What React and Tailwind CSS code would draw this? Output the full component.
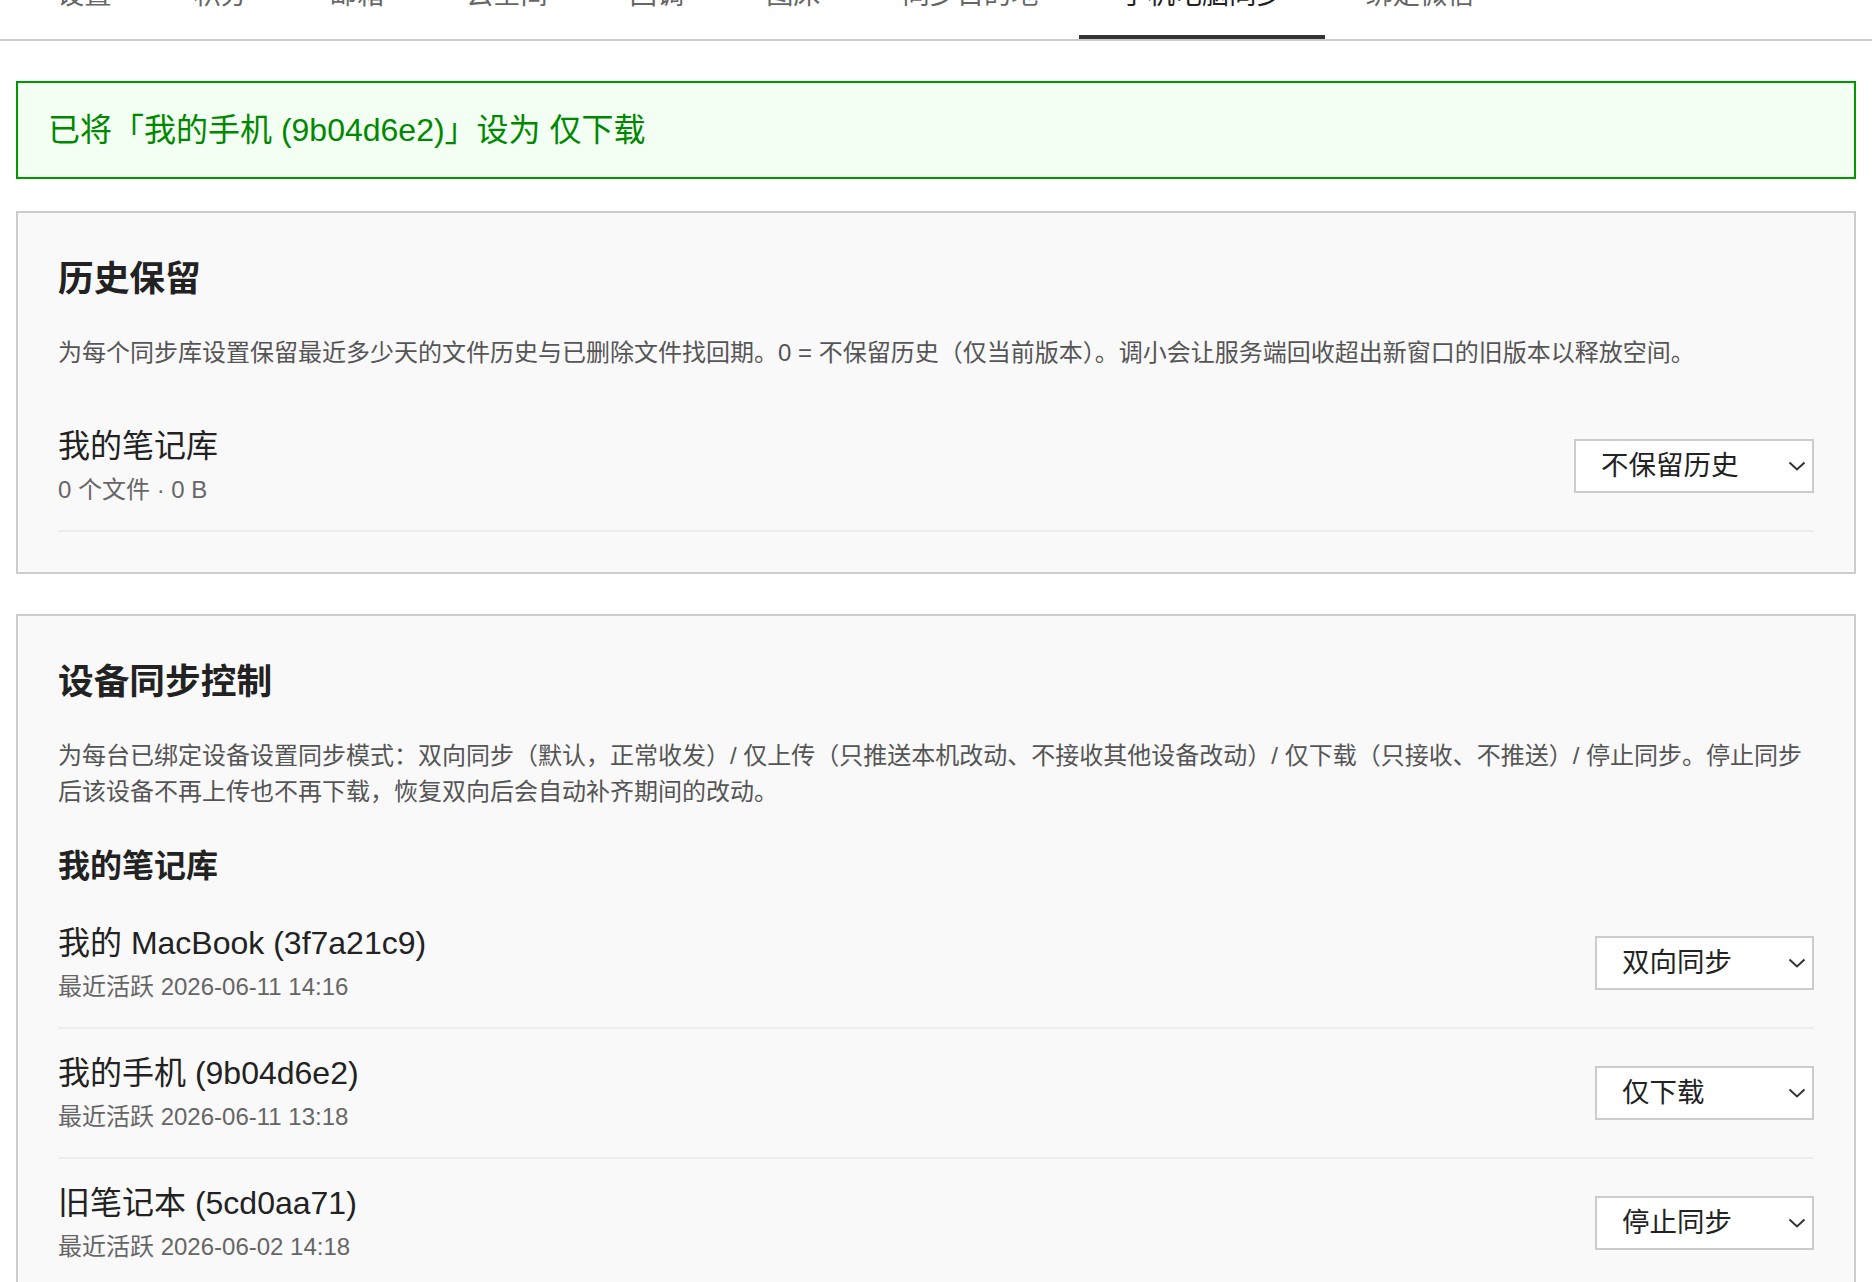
import React from 'react';

const tabs = ['设置', '积分', '邮箱', '云空间', '回调', '图床', '同步目的地', '手机电脑同步', '绑定微信'];

const devices = [
  { name: '我的 MacBook (3f7a21c9)', last: '最近活跃 2026-06-11 14:16', mode: '双向同步' },
  { name: '我的手机 (9b04d6e2)', last: '最近活跃 2026-06-11 13:18', mode: '仅下载' },
  { name: '旧笔记本 (5cd0aa71)', last: '最近活跃 2026-06-02 14:18', mode: '停止同步' },
];

const Chevron = () => (
  <svg width="18" height="10" viewBox="0 0 18 10" fill="none">
    <path d="M1.5 1.5 L9 8.5 L16.5 1.5" stroke="#333" strokeWidth="2" />
  </svg>
);

const SelectBox = ({ value, width }) => (
  <div className={`${width} h-[54px] flex items-center justify-between pl-[25px] pr-[6px] bg-white border-2 border-[#ccc] text-[27.5px] text-[#222]`}>
    <span>{value}</span>
    <Chevron />
  </div>
);

const Row = ({ title, meta, children }) => (
  <div className="flex items-center justify-between py-[22px] border-b-2 border-[#eee]">
    <div>
      <div className="text-[32px] leading-[44px] text-[#222]">{title}</div>
      <div className="mt-[4px] text-[24px] leading-[36px] text-[#666]">{meta}</div>
    </div>
    {children}
  </div>
);

const App = () => {
  return (
    <div className="min-h-screen bg-white overflow-hidden" style={{ fontFamily: '"Liberation Sans", "Noto Sans CJK SC", sans-serif' }}>
      {/* tab bar, scrolled partly out of view */}
      <div className="-mt-[45px] flex pl-[16px] border-b-2 border-[#ccc]">
        {tabs.map((t) => (
          <div
            key={t}
            className={
              t === '手机电脑同步'
                ? 'px-[41px] py-[20px] text-[27.2px] leading-[40px] text-[#222] border-b-4 border-[#333]'
                : 'px-[41px] py-[20px] text-[27.2px] leading-[40px] text-[#666] border-b-4 border-transparent'
            }
          >
            {t}
          </div>
        ))}
      </div>

      <div className="px-[16px]">
        <div className="mt-[40px] border-2 border-[#090] bg-[#f3fff3] pl-[30px] py-[27px] text-[32px] leading-[40px] text-[#080]">
          已将「我的手机 (9b04d6e2)」设为 仅下载
        </div>

        <div className="mt-[32px] border-2 border-[#ccc] bg-[#f9f9f9] p-[40px]">
          <h2 className="text-[35.7px] leading-[52px] font-bold text-[#222]">历史保留</h2>
          <p className="mt-[30px] text-[24px] leading-[36.5px] text-[#555]">
            为每个同步库设置保留最近多少天的文件历史与已删除文件找回期。0 = 不保留历史（仅当前版本）。调小会让服务端回收超出新窗口的旧版本以释放空间。
          </p>
          <div className="mt-[30px]">
            <Row title="我的笔记库" meta="0 个文件 · 0 B">
              <SelectBox value="不保留历史" width="w-[240px]" />
            </Row>
          </div>
        </div>

        <div className="mt-[40px] border-2 border-[#ccc] bg-[#f9f9f9] p-[40px]">
          <h2 className="text-[35.7px] leading-[52px] font-bold text-[#222]">设备同步控制</h2>
          <p className="mt-[30px] text-[24px] leading-[36.5px] text-[#555]">
            为每台已绑定设备设置同步模式：双向同步（默认，正常收发）/ 仅上传（只推送本机改动、不接收其他设备改动）/ 仅下载（只接收、不推送）/ 停止同步。停止同步后该设备不再上传也不再下载，恢复双向后会自动补齐期间的改动。
          </p>
          <h3 className="mt-[33px] text-[32px] leading-[44px] font-bold text-[#222]">我的笔记库</h3>
          <div className="mt-[11px]">
            {devices.map((d) => (
              <Row key={d.name} title={d.name} meta={d.last}>
                <SelectBox value={d.mode} width="w-[219px]" />
              </Row>
            ))}
          </div>
        </div>
      </div>
    </div>
  );
};

export default App;
